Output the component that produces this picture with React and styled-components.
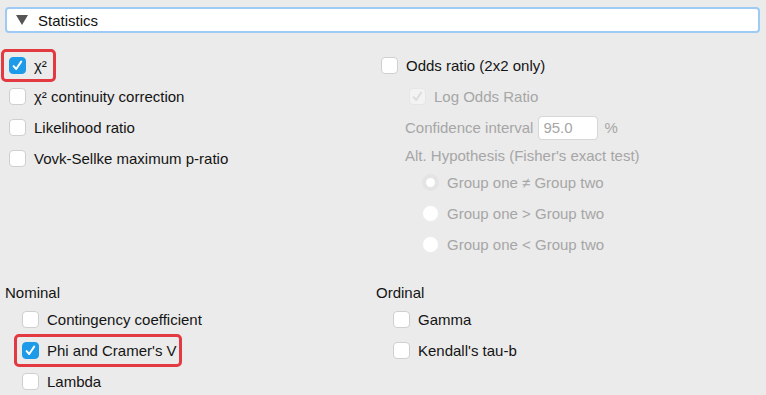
import React from 'react';
import styled, { createGlobalStyle, css } from 'styled-components';

const GlobalStyle = createGlobalStyle`
  html, body {
    margin: 0;
    padding: 0;
    background: #ebebeb;
  }
  body {
    font-family: "Liberation Sans", Arial, sans-serif;
    font-size: 15px;
    color: #141414;
  }
`;

const Page = styled.div`
  width: 766px;
  height: 395px;
  overflow: hidden;
  background: #ebebeb;
`;

const Header = styled.div`
  margin: 7px 6px 0 5px;
  height: 22px;
  border: 2px solid #9dcbf5;
  border-radius: 4px;
  background: #fff;
  display: flex;
  align-items: center;
  gap: 10px;
  padding-left: 9px;
`;

const Triangle = styled.span`
  width: 0;
  height: 0;
  border-left: 6px solid transparent;
  border-right: 6px solid transparent;
  border-top: 10px solid #555;
`;

const HeaderTitle = styled.span`
  font-size: 15px;
  color: #111;
`;

const Section = styled.div`
  display: grid;
  grid-template-columns: ${(p) => p.$left}px 1fr;
  padding-left: ${(p) => p.$pad}px;
  margin-top: ${(p) => p.$top}px;
`;

const Column = styled.div`
  display: flex;
  flex-direction: column;
  align-items: flex-start;
`;

const Row = styled.div`
  position: relative;
  display: inline-flex;
  align-items: center;
  gap: 8px;
  height: ${(p) => p.$h || 31}px;
  padding-left: ${(p) => p.$indent || 0}px;
  color: ${(p) => (p.$disabled ? '#a6a6a6' : '#141414')};
  white-space: nowrap;
  ${(p) =>
    p.$marked &&
    css`
      &::after {
        content: '';
        position: absolute;
        top: -1px;
        bottom: -1px;
        left: ${p.$indent - 8}px;
        right: ${-p.$markRight}px;
        border: 3px solid #e23a40;
        border-radius: 5px;
        pointer-events: none;
      }
    `}
`;

const Box = styled.span`
  box-sizing: border-box;
  width: 17px;
  height: 17px;
  border-radius: 4px;
  flex: none;
  display: inline-flex;
  align-items: center;
  justify-content: center;
  border: 1px solid ${(p) => (p.$checked ? (p.$disabled ? '#e6e6e6' : '#1e9be8') : '#cfcfcf')};
  background: ${(p) => (p.$checked ? (p.$disabled ? '#f3f3f3' : '#1e9be8') : '#fff')};
`;

const Radio = styled.span`
  box-sizing: border-box;
  width: 17px;
  height: 17px;
  border-radius: 50%;
  flex: none;
  background: #fff;
  border: ${(p) => (p.$checked ? '4px solid #e4e4e4' : '1px solid #ececec')};
`;

const Label = styled.span`
  line-height: 17px;
`;

const GroupLabel = styled.div`
  height: 24px;
  display: flex;
  align-items: center;
  color: #141414;
`;

const NumberInput = styled.span`
  box-sizing: border-box;
  width: 60px;
  height: 24px;
  border: 1px solid #d6d6d6;
  border-radius: 4px;
  background: #fff;
  color: #a6a6a6;
  display: inline-flex;
  align-items: center;
  padding-left: 4px;
  margin: 0 0 0 -1px;
`;

const Check = ({ color }) => (
  <svg width="13" height="13" viewBox="0 0 12 12">
    <path d="M2.4 6.6 L4.8 9.2 L9.4 2.4" fill="none" stroke={color} strokeWidth="1.8" strokeLinecap="round" strokeLinejoin="round" />
  </svg>
);

const CheckRow = ({ children, checked, disabled, indent = 0, marked, markRight = 5 }) => (
  <Row $disabled={disabled} $indent={indent} $marked={marked} $markRight={markRight}>
    <Box $checked={checked} $disabled={disabled}>
      {checked && <Check color={disabled ? '#dcdcdc' : '#fff'} />}
    </Box>
    <Label>{children}</Label>
  </Row>
);

const RadioRow = ({ children, checked }) => (
  <Row $disabled $indent={41}>
    <Radio $checked={checked} />
    <Label>{children}</Label>
  </Row>
);

export default function App() {
  return (
    <Page>
      <GlobalStyle />
      <Header>
        <Triangle />
        <HeaderTitle>Statistics</HeaderTitle>
      </Header>

      <Section $left={372} $pad={9} $top={17}>
        <Column>
          <CheckRow checked marked markRight={9}>χ²</CheckRow>
          <CheckRow>χ² continuity correction</CheckRow>
          <CheckRow>Likelihood ratio</CheckRow>
          <CheckRow>Vovk-Sellke maximum p-ratio</CheckRow>
        </Column>
        <Column>
          <CheckRow>Odds ratio (2x2 only)</CheckRow>
          <CheckRow checked disabled indent={28}>Log Odds Ratio</CheckRow>
          <Row $disabled $indent={24} style={{ gap: 6 }}>
            <Label>Confidence interval</Label>
            <NumberInput>95.0</NumberInput>
            <Label>%</Label>
          </Row>
          <Row $disabled $indent={24} $h={24}>
            <Label>Alt. Hypothesis (Fisher's exact test)</Label>
          </Row>
          <RadioRow checked>Group one ≠ Group two</RadioRow>
          <RadioRow>Group one &gt; Group two</RadioRow>
          <RadioRow>Group one &lt; Group two</RadioRow>
        </Column>
      </Section>

      <Section $left={371} $pad={5} $top={20}>
        <Column>
          <GroupLabel>Nominal</GroupLabel>
          <CheckRow indent={17}>Contingency coefficient</CheckRow>
          <CheckRow checked marked indent={17}>Phi and Cramer's V</CheckRow>
          <CheckRow indent={17}>Lambda</CheckRow>
        </Column>
        <Column>
          <GroupLabel>Ordinal</GroupLabel>
          <CheckRow indent={17}>Gamma</CheckRow>
          <CheckRow indent={17}>Kendall's tau-b</CheckRow>
        </Column>
      </Section>
    </Page>
  );
}
